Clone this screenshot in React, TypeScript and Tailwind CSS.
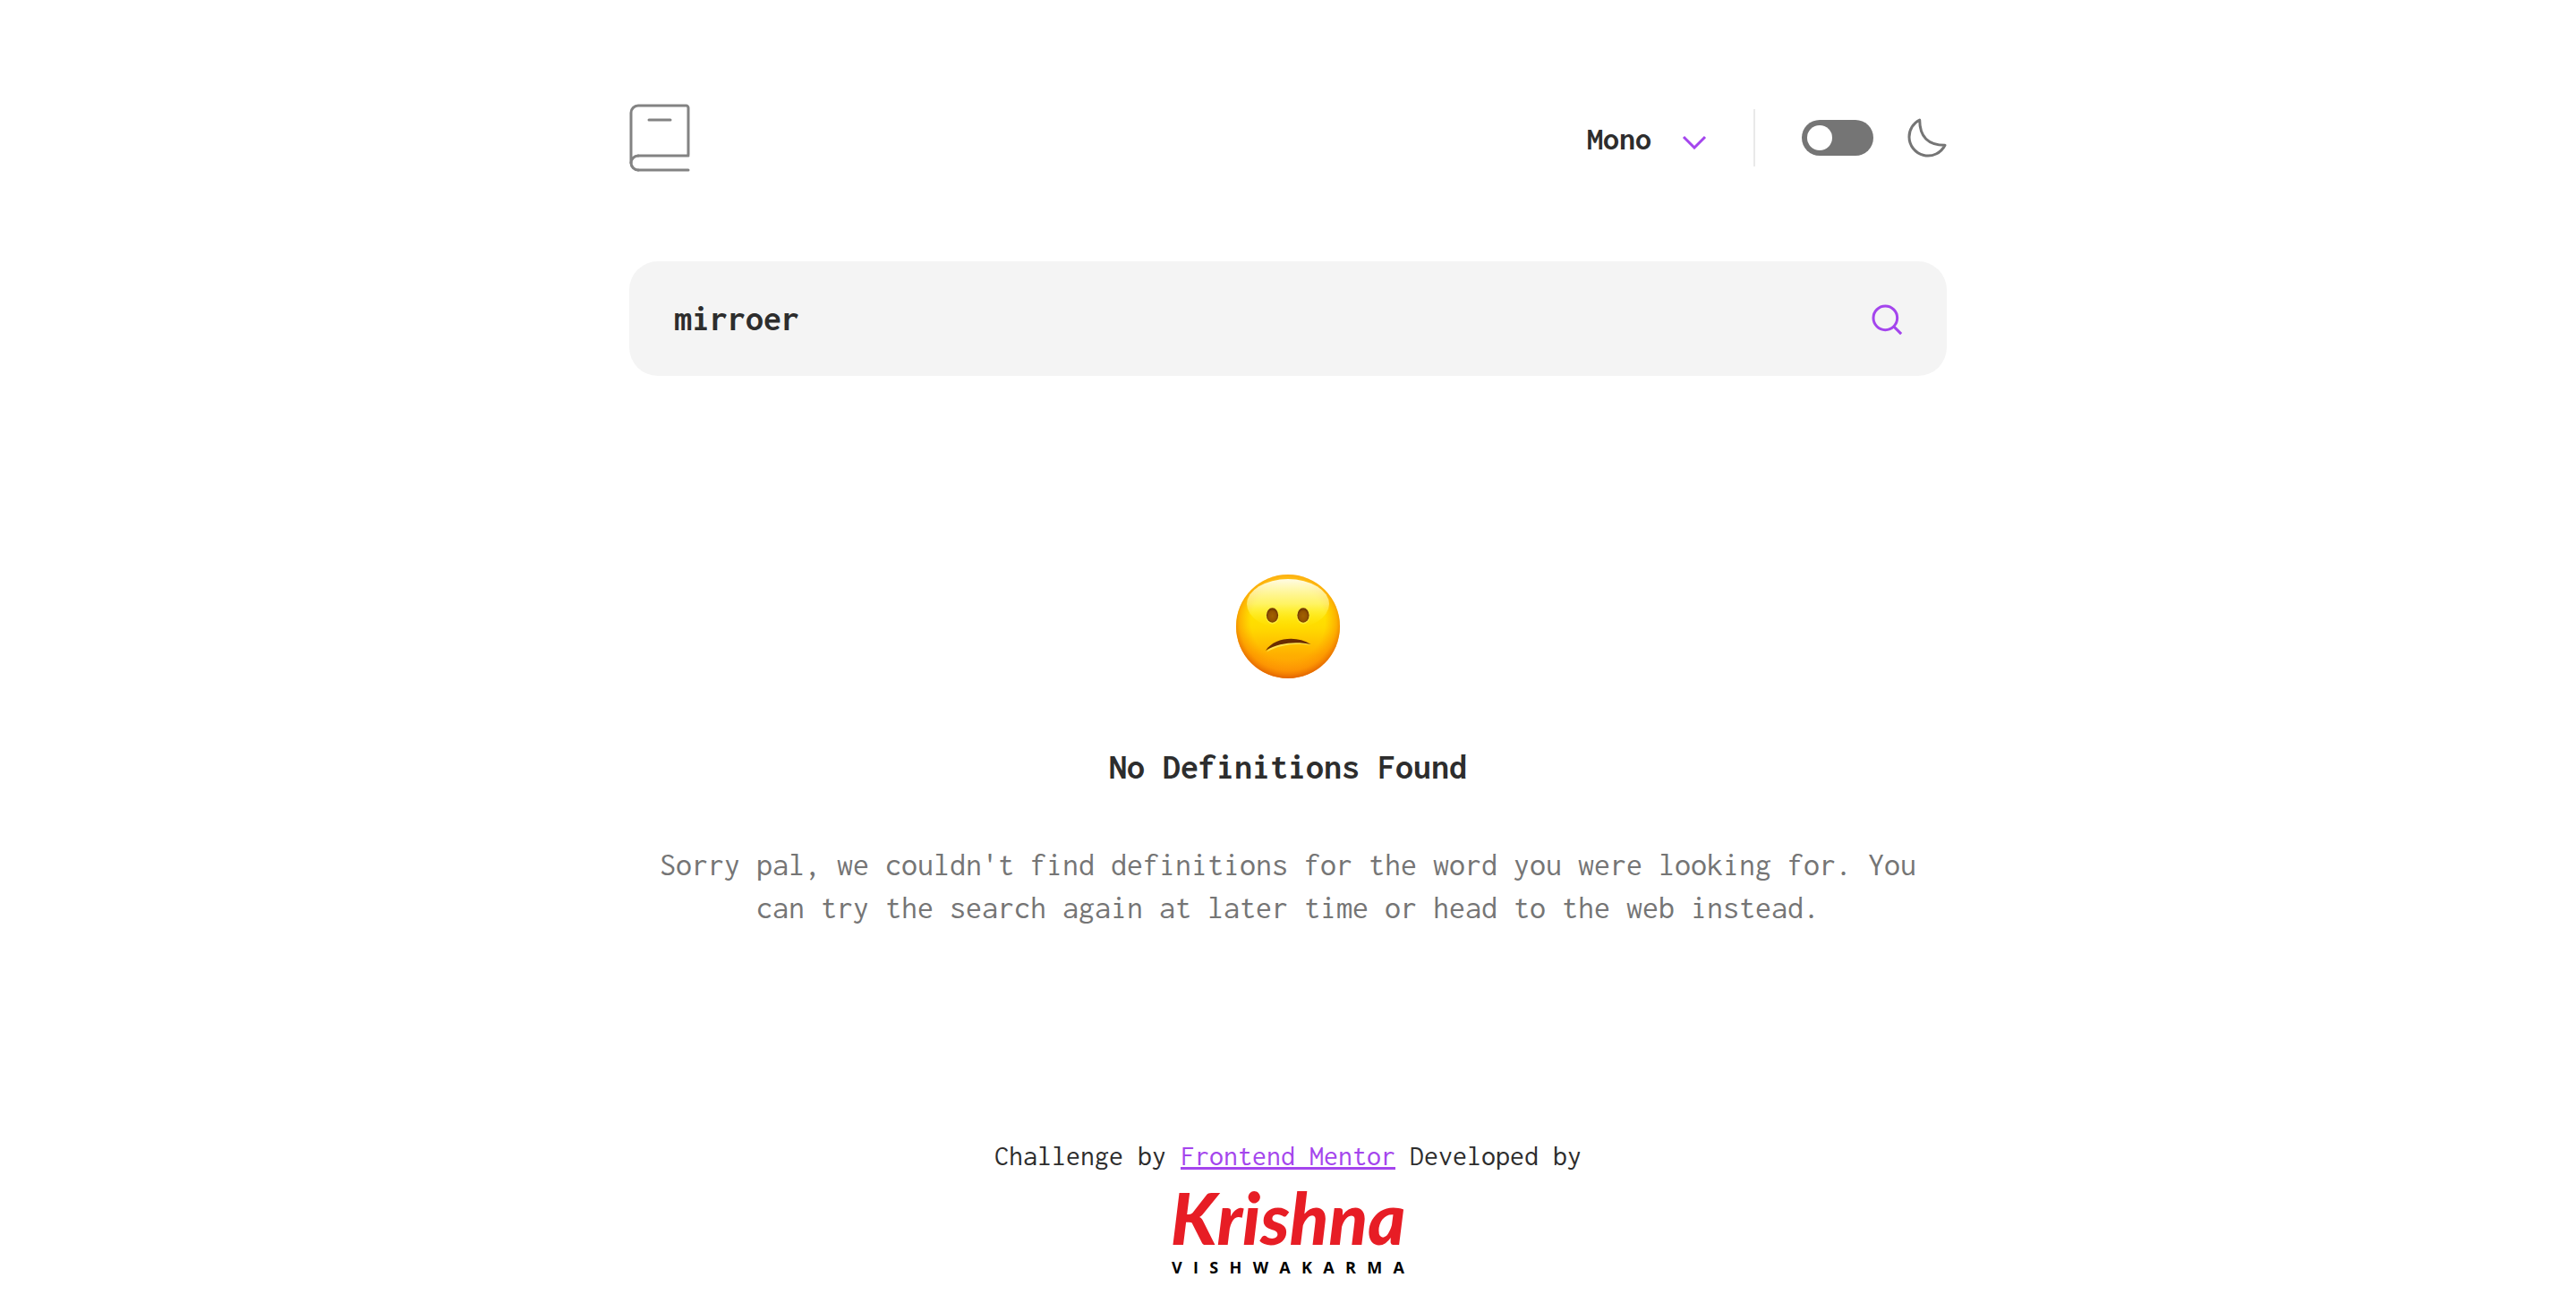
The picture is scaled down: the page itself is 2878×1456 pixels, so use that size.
import { useState } from "react";

function BookLogo() {
  return (
    <svg width="68" height="76" viewBox="0 0 34 38" fill="none" stroke="#838383" strokeLinecap="round" strokeWidth="1.5" aria-hidden="true">
      <path d="M1 33V5a4 4 0 0 1 4-4h26.8A1.2 1.2 0 0 1 33 2.2v26.228M5 29h28M5 37h28" />
      <path strokeLinejoin="round" d="M5 37a4 4 0 1 1 0-8" />
      <path d="M11 9h12" />
    </svg>
  );
}

function Chevron() {
  return (
    <svg width="28" height="16" viewBox="0 0 14 8" fill="none" stroke="#A445ED" strokeWidth="1.5" aria-hidden="true" className="pointer-events-none mt-2.5">
      <path d="m1 1 6 6 6-6" />
    </svg>
  );
}

function Moon() {
  return (
    <svg width="44" height="44" viewBox="0 0 22 22" aria-hidden="true">
      <path
        fill="none"
        stroke="#757575"
        strokeWidth="1.5"
        strokeLinecap="round"
        strokeLinejoin="round"
        d="M1 10.449a10.544 10.544 0 0 0 19.993 4.686C11.544 15.135 6.858 10.448 6.858 1A10.545 10.545 0 0 0 1 10.449Z"
      />
    </svg>
  );
}

function SearchIcon() {
  return (
    <svg width="36" height="36" viewBox="0 0 18 18" aria-hidden="true">
      <path
        fill="none"
        stroke="#A445ED"
        strokeWidth="1.5"
        d="m12.663 12.663 3.887 3.887M1 7.664a6.665 6.665 0 1 0 13.33 0 6.665 6.665 0 0 0-13.33 0Z"
      />
    </svg>
  );
}

function ConfusedFace() {
  return (
    <svg width="116" height="116" viewBox="0 0 116 116" role="img" aria-label="Confused face">
      <defs>
        <linearGradient id="skin" x1="0" y1="0" x2="0" y2="1">
          <stop offset="0" stopColor="#FFD21F" />
          <stop offset="0.35" stopColor="#FFE500" />
          <stop offset="0.52" stopColor="#FFD900" />
          <stop offset="0.78" stopColor="#FFAE00" />
          <stop offset="1" stopColor="#FF9A0A" />
        </linearGradient>
        <radialGradient id="rim" cx="0.5" cy="0.46" r="0.54">
          <stop offset="0.66" stopColor="#FF9000" stopOpacity="0" />
          <stop offset="0.86" stopColor="#FA8600" stopOpacity="0.5" />
          <stop offset="1" stopColor="#E06000" stopOpacity="0.95" />
        </radialGradient>
        <linearGradient id="shine" x1="0" y1="0" x2="0" y2="1">
          <stop offset="0" stopColor="#FFFFF0" stopOpacity="0.95" />
          <stop offset="0.5" stopColor="#FFFFA0" stopOpacity="0.6" />
          <stop offset="1" stopColor="#FFF000" stopOpacity="0" />
        </linearGradient>
        <radialGradient id="eye" cx="0.5" cy="0.55" r="0.5">
          <stop offset="0" stopColor="#A36200" />
          <stop offset="0.65" stopColor="#945400" />
          <stop offset="1" stopColor="#6E3500" />
        </radialGradient>
      </defs>
      <circle cx="58" cy="58" r="58" fill="url(#skin)" />
      <circle cx="58" cy="58" r="58" fill="url(#rim)" />
      <ellipse cx="58" cy="33" rx="46" ry="28" fill="url(#shine)" />
      <ellipse cx="40.500" cy="46.500" rx="7.500" ry="9" fill="#FFEF4A" opacity="0.7" />
      <ellipse cx="75" cy="46.500" rx="7.500" ry="9" fill="#FFEF4A" opacity="0.7" />
      <ellipse cx="40.500" cy="45.500" rx="6.600" ry="8.300" fill="url(#eye)" />
      <ellipse cx="75" cy="45.500" rx="6.600" ry="8.300" fill="url(#eye)" />
      <path d="M34 86.500C43 74 68 71 83.500 79 68 76 49 78 34 86.500Z" fill="#FFE24A" />
      <path d="M33 85C43 70 68 68 83.500 78 67 74.500 48 76 33 85Z" fill="#6B2C00" />
    </svg>
  );
}

export default function App() {
  const [word, setWord] = useState("mirroer");
  const [dark, setDark] = useState(false);
  const [font, setFont] = useState("Mono");

  return (
    <div className="flex min-h-screen flex-col bg-white font-['Inconsolata','Noto_Sans_Mono_CJK_SC','Liberation_Mono',monospace] text-[#2d2d2d]">
      <div className="mx-auto w-full max-w-[1472px]">
        <header className="flex items-center justify-between pt-29">
          <a href="#" aria-label="Dictionary home">
            <BookLogo />
          </a>
          <div className="flex items-center">
            <label className="flex items-center gap-6">
              <select
                aria-label="Font"
                value={font}
                onChange={(e) => setFont(e.target.value)}
                className="h-15 w-[82px] appearance-none bg-transparent pt-0.5 text-[36px] font-bold"
              >
                <option>Sans Serif</option>
                <option>Serif</option>
                <option>Mono</option>
              </select>
              <Chevron />
            </label>
            <div className="mx-13 h-16 w-0.5 bg-[#e9e9e9]" />
            <label className="flex items-center gap-[38px]">
              <input
                type="checkbox"
                role="switch"
                aria-label="Dark mode"
                checked={dark}
                onChange={(e) => setDark(e.target.checked)}
                className="h-10 w-20 appearance-none rounded-full bg-[#757575] p-1.5 before:block before:size-7 before:rounded-full before:bg-white checked:bg-[#a445ed] checked:before:ml-auto"
              />
              <Moon />
            </label>
          </div>
        </header>

        <main>
          <form
            onSubmit={(e) => e.preventDefault()}
            className="mt-25 flex h-32 items-center rounded-[32px] bg-[#f4f4f4] pr-12 pl-[50px]"
          >
            <input
              type="text"
              aria-label="Search for a word"
              value={word}
              onChange={(e) => setWord(e.target.value)}
              className="min-w-0 flex-1 bg-transparent text-[40px] leading-[60px] font-bold outline-none"
            />
            <button type="submit" aria-label="Search" className="pt-1">
              <SearchIcon />
            </button>
          </form>

          <section className="flex flex-col items-center text-center">
            <div className="mt-[222px]">
              <ConfusedFace />
            </div>
            <h1 className="mt-[69px] text-[40px] leading-[60px] font-bold">No Definitions Found</h1>
            <p className="mt-[55px] text-[36px] leading-[48px] text-[#757575]">
              Sorry pal, we couldn't find definitions for the word you were looking for. You can try the search again at
              later time or head to the web instead.
            </p>
          </section>
        </main>

        <footer className="mt-[230px] flex flex-col items-center">
          <p className="text-[32px] leading-[48px]">
            Challenge by{" "}
            <a href="#" className="text-[#a445ed] underline">
              Frontend Mentor
            </a>{" "}
            Developed by
          </p>
          <a href="#" aria-label="Krishna Vishwakarma" className="flex w-[260px] flex-col items-center">
            <span className="font-['Lato',sans-serif] text-[80px] leading-[88px] font-black text-[#e71d25] italic">
              Krishna
            </span>
            <span className="flex w-full justify-between font-['Open_Sans',sans-serif] text-[18px] leading-[24px] font-bold text-black">
              {"VISHWAKARMA".split("").map((letter, i) => (
                <span key={i}>{letter}</span>
              ))}
            </span>
          </a>
        </footer>
      </div>
    </div>
  );
}
